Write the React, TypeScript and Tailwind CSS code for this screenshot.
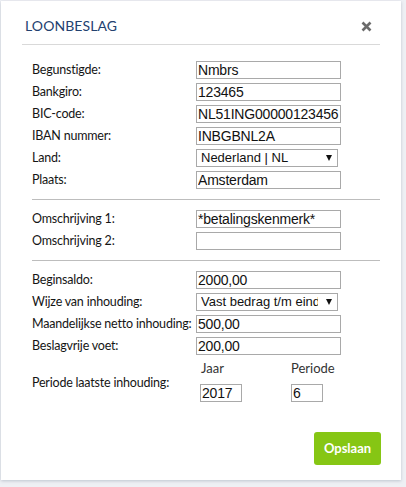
import React, { useState } from "react";

const labelFont = { fontFamily: "Lato, 'Open Sans', sans-serif" };
const fieldFont = { fontFamily: "'Liberation Sans', Arial, sans-serif" };

const TextField: React.FC<{ value: string; onChange: (v: string) => void; className?: string }> = ({
    value,
    onChange,
    className = "w-[145px]",
}) => (
    <input
        type="text"
        value={value}
        onChange={(e) => onChange(e.target.value)}
        className={`${className} h-[18px] border border-[#a9a9a9] bg-white px-px text-[14px] leading-[16px] tracking-[-0.2px] text-[#111] outline-none`}
        style={fieldFont}
    />
);

// custom dropdown look (native select renders differently per browser)
const SelectField: React.FC<{ value: string; options: string[]; onChange: (v: string) => void }> = ({
    value,
    options,
    onChange,
}) => {
    const [open, setOpen] = useState(false);
    return (
        <div className="relative">
            <button
                type="button"
                onClick={() => setOpen(!open)}
                className="w-[142px] h-[18px] border border-[#a9a9a9] bg-white pl-[4px] pr-[4px] flex items-center justify-between text-[13px] text-[#111] overflow-hidden"
                style={fieldFont}
            >
                <span className="w-[117px] overflow-hidden whitespace-nowrap text-left leading-[16px]">{value}</span>
                <span className="w-0 h-0 mr-[1px] border-l-[3px] border-r-[3px] border-t-[6px] border-l-transparent border-r-transparent border-t-[#111]" />
            </button>
            {open && (
                <ul className="absolute left-0 top-[18px] z-10 w-[142px] border border-[#a9a9a9] bg-white text-[13px]" style={fieldFont}>
                    {options.map((o) => (
                        <li
                            key={o}
                            onClick={() => {
                                onChange(o);
                                setOpen(false);
                            }}
                            className="px-[4px] hover:bg-[#1e90ff] hover:text-white"
                        >
                            {o}
                        </li>
                    ))}
                </ul>
            )}
        </div>
    );
};

const Row: React.FC<{ label: string; children: React.ReactNode }> = ({ label, children }) => (
    <div className="flex items-center h-[18px]">
        <label className="w-[164px] text-[12.5px] tracking-[-0.2px] text-[#151515] whitespace-nowrap" style={labelFont}>
            {label}
        </label>
        {children}
    </div>
);

const App: React.FC = () => {
    const [form, setForm] = useState({
        begunstigde: "Nmbrs",
        bankgiro: "123465",
        bic: "NL51ING00000123456",
        iban: "INBGBNL2A",
        land: "Nederland | NL",
        plaats: "Amsterdam",
        oms1: "*betalingskenmerk*",
        oms2: "",
        beginsaldo: "2000,00",
        wijze: "Vast bedrag t/m einde",
        maand: "500,00",
        voet: "200,00",
        jaar: "2017",
        periode: "6",
    });
    const set = (k: keyof typeof form) => (v: string) => setForm({ ...form, [k]: v });

    return (
        <div className="w-[406px] h-[487px] bg-[#eef0f4] pt-px pl-px overflow-hidden">
            <div className="w-[400px] h-[479px] bg-white shadow-[0_1px_3px_rgba(100,115,140,0.35)] flex flex-col">
                {/* header */}
                <div className="mx-[21px] h-[44px] border-b border-[#d9d9d9] flex items-center justify-between pt-[6px]">
                    <h2
                        className="pl-[3px] text-[14px] tracking-[0.1px] text-[#23416f]"
                        style={labelFont}
                    >
                        LOONBESLAG
                    </h2>
                    <button className="mr-[8px] mt-[1px]" aria-label="Sluiten">
                        <svg width="11" height="11" viewBox="0 0 11 11">
                            <path d="M1.5 1.5 L9.5 9.5 M9.5 1.5 L1.5 9.5" stroke="#6b6b6b" strokeWidth="2.6" strokeLinecap="butt" />
                        </svg>
                    </button>
                </div>

                <div className="pl-[31px] pr-[21px]">
                    <div className="pt-[16px] pb-[10px] flex flex-col gap-[4px]">
                        <Row label="Begunstigde:">
                            <TextField value={form.begunstigde} onChange={set("begunstigde")} />
                        </Row>
                        <Row label="Bankgiro:">
                            <TextField value={form.bankgiro} onChange={set("bankgiro")} />
                        </Row>
                        <Row label="BIC-code:">
                            <TextField value={form.bic} onChange={set("bic")} />
                        </Row>
                        <Row label="IBAN nummer:">
                            <TextField value={form.iban} onChange={set("iban")} />
                        </Row>
                        <Row label="Land:">
                            <SelectField value={form.land} options={["Nederland | NL", "België | BE", "Duitsland | DE"]} onChange={set("land")} />
                        </Row>
                        <Row label="Plaats:">
                            <TextField value={form.plaats} onChange={set("plaats")} />
                        </Row>
                    </div>

                    <div className="border-t border-[#bdbdbd] pt-[10px] pb-[10px] flex flex-col gap-[4px]">
                        <Row label="Omschrijving 1:">
                            <TextField value={form.oms1} onChange={set("oms1")} />
                        </Row>
                        <Row label="Omschrijving 2:">
                            <TextField value={form.oms2} onChange={set("oms2")} />
                        </Row>
                    </div>

                    <div className="border-t border-[#bdbdbd] pt-[10px] flex flex-col gap-[4px]">
                        <Row label="Beginsaldo:">
                            <TextField value={form.beginsaldo} onChange={set("beginsaldo")} />
                        </Row>
                        <Row label="Wijze van inhouding:">
                            <SelectField value={form.wijze} options={["Vast bedrag t/m einde", "Percentage"]} onChange={set("wijze")} />
                        </Row>
                        <Row label="Maandelijkse netto inhouding:">
                            <TextField value={form.maand} onChange={set("maand")} />
                        </Row>
                        <Row label="Beslagvrije voet:">
                            <TextField value={form.voet} onChange={set("voet")} />
                        </Row>
                    </div>

                    <div className="flex items-center mt-[6px]">
                        <label className="w-[168px] text-[12.5px] tracking-[-0.2px] text-[#151515] pt-[3px]" style={labelFont}>
                            Periode laatste inhouding:
                        </label>
                        <div className="flex gap-[49px]">
                            <div className="flex flex-col gap-[8px]">
                                <span className="text-[13px] text-[#333] pl-[1px] h-[15px] leading-[15px]" style={labelFont}>
                                    Jaar
                                </span>
                                <TextField value={form.jaar} onChange={set("jaar")} className="w-[42px]" />
                            </div>
                            <div className="flex flex-col gap-[8px]">
                                <span className="text-[13px] text-[#333] h-[15px] leading-[15px]" style={labelFont}>
                                    Periode
                                </span>
                                <TextField value={form.periode} onChange={set("periode")} className="w-[32px]" />
                            </div>
                        </div>
                    </div>
                </div>

                <div className="flex justify-end mt-[30px] mr-[20px]">
                    <button
                        className="w-[67px] h-[33px] rounded-[3px] bg-[#86c614] text-white text-[13px] font-bold"
                        style={labelFont}
                    >
                        Opslaan
                    </button>
                </div>
            </div>
        </div>
    );
};

export default App;
